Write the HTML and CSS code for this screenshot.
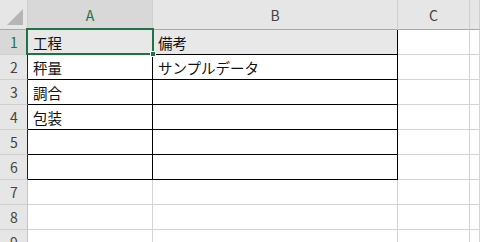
FILE: index.html
```html
<!DOCTYPE html>
<html lang="ja">
<head>
    <meta charset="UTF-8">
    <meta name="viewport" content="width=device-width, initial-scale=1.0">
    <title>シート</title>
    <link rel="stylesheet" href="styles.css">
</head>
<body>
    <div class="sheet">
        <!-- 列見出し -->
        <div class="corner"><span class="tri"></span></div>
        <div class="col-head active">A</div>
        <div class="col-head">B</div>
        <div class="col-head">C</div>
        <div class="col-head"></div>

        <div class="row-head active edge">1</div>
        <div class="cell fill box selected">工程<span class="sel"><span class="handle"></span></span></div>
        <div class="cell fill box">備考</div>
        <div class="cell"></div>
        <div class="cell"></div>

        <div class="row-head edge">2</div>
        <div class="cell box">秤量</div>
        <div class="cell box">サンプルデータ</div>
        <div class="cell"></div>
        <div class="cell"></div>

        <div class="row-head edge">3</div>
        <div class="cell box">調合</div>
        <div class="cell box"></div>
        <div class="cell"></div>
        <div class="cell"></div>

        <div class="row-head edge">4</div>
        <div class="cell box">包装</div>
        <div class="cell box"></div>
        <div class="cell"></div>
        <div class="cell"></div>

        <div class="row-head edge">5</div>
        <div class="cell box"></div>
        <div class="cell box"></div>
        <div class="cell"></div>
        <div class="cell"></div>

        <div class="row-head edge">6</div>
        <div class="cell box"></div>
        <div class="cell box"></div>
        <div class="cell"></div>
        <div class="cell"></div>

        <div class="row-head">7</div>
        <div class="cell"></div>
        <div class="cell"></div>
        <div class="cell"></div>
        <div class="cell"></div>

        <div class="row-head">8</div>
        <div class="cell"></div>
        <div class="cell"></div>
        <div class="cell"></div>
        <div class="cell"></div>

        <div class="row-head">9</div>
        <div class="cell"></div>
        <div class="cell"></div>
        <div class="cell"></div>
        <div class="cell"></div>
    </div>
</body>
</html>
```

FILE: styles.css
```css
* {
    margin: 0;
    padding: 0;
    box-sizing: border-box;
}

body {
    background: #fff;
    width: 480px;
    height: 242px;
    overflow: hidden;
    font-family: "Noto Sans CJK JP", "Noto Sans", sans-serif;
}

.sheet {
    display: grid;
    grid-template-columns: 28px 125px 245px 72px 10px;
    grid-template-rows: 30px repeat(9, 25px);
}

.corner {
    background: #e6e6e6;
    border-right: 1px solid #d0d0d0;
    border-bottom: 1px solid #a8a8a8;
    position: relative;
}

.tri {
    position: absolute;
    right: 4px;
    bottom: 4px;
    width: 0;
    height: 0;
    border-left: 16px solid transparent;
    border-bottom: 16px solid #b5b5b5;
}

.col-head {
    background: #e6e6e6;
    border-right: 1px solid #cfcfcf;
    border-bottom: 1px solid #a8a8a8;
    display: flex;
    align-items: center;
    justify-content: center;
    font-size: 14px;
    color: #444;
    padding-top: 1px;
}

.row-head {
    background: #e6e6e6;
    border-right: 1px solid #c4c4c4;
    border-bottom: 1px solid #cfcfcf;
    display: flex;
    align-items: center;
    justify-content: center;
    font-size: 14px;
    color: #444;
    padding-left: 1px;
}

.row-head.edge {
    border-right-color: #222;
}

.col-head.active,
.row-head.active {
    background: #d8d8d8;
    color: #217346;
}

.cell {
    border-right: 1px solid #d4d4d4;
    border-bottom: 1px solid #d4d4d4;
    font-size: 14.5px;
    color: #111;
    padding-left: 5px;
    display: flex;
    align-items: center;
    white-space: nowrap;
}

.cell.box {
    border-right-color: #000;
    border-bottom-color: #000;
}

.cell.fill {
    background: #e8e8e8;
}

.selected {
    position: relative;
}

.sel {
    position: absolute;
    left: -2px;
    top: -2px;
    right: -2px;
    bottom: -1px;
    border: 2px solid #217346;
}

.handle {
    position: absolute;
    right: -4px;
    bottom: -4px;
    width: 6px;
    height: 6px;
    background: #217346;
    border: 1px solid #fff;
}
```
